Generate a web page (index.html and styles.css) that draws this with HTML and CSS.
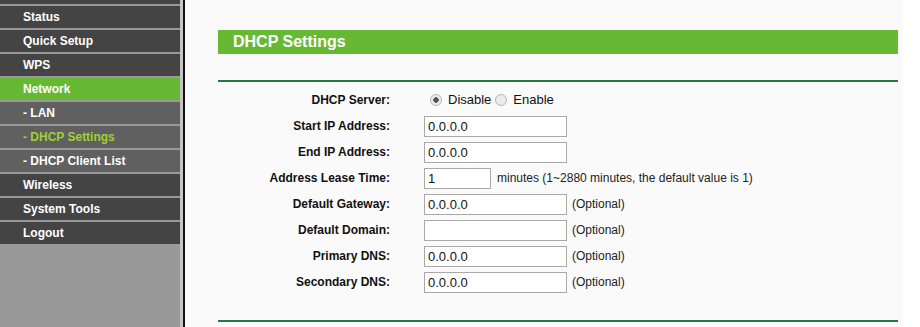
FILE: index.html
```html
<!DOCTYPE html>
<html lang="en">
  <head>
    <meta charset="UTF-8" />
    <title>DHCP Settings</title>
    <link rel="stylesheet" href="styles.css">
  </head>
  <body>
    <div class="frame">
      <div class="side">
        <div class="menu-top"></div>
        <div class="item">Status</div>
        <div class="item">Quick Setup</div>
        <div class="item">WPS</div>
        <div class="item active">Network</div>
        <div class="item sub">- LAN</div>
        <div class="item sub current">- DHCP Settings</div>
        <div class="item sub">- DHCP Client List</div>
        <div class="item">Wireless</div>
        <div class="item">System Tools</div>
        <div class="item">Logout</div>
      </div>
      <div class="divider"></div>
      <div class="main">
        <div class="title-bar">DHCP Settings</div>
        <div class="rule"></div>
        <form class="form">
          <div class="row">
            <label class="label">DHCP Server:</label>
            <div class="field radios">
              <input type="radio" name="srv" checked /><span>Disable</span>
              <input type="radio" name="srv" /><span>Enable</span>
            </div>
          </div>
          <div class="row">
            <label class="label">Start IP Address:</label>
            <div class="field"><input class="text" type="text" value="0.0.0.0" /></div>
          </div>
          <div class="row">
            <label class="label">End IP Address:</label>
            <div class="field"><input class="text" type="text" value="0.0.0.0" /></div>
          </div>
          <div class="row">
            <label class="label">Address Lease Time:</label>
            <div class="field"><input class="text short" type="text" value="1" /><span class="note">minutes (1~2880 minutes, the default value is 1)</span></div>
          </div>
          <div class="row">
            <label class="label">Default Gateway:</label>
            <div class="field"><input class="text" type="text" value="0.0.0.0" /><span class="note">(Optional)</span></div>
          </div>
          <div class="row">
            <label class="label">Default Domain:</label>
            <div class="field"><input class="text" type="text" value="" /><span class="note">(Optional)</span></div>
          </div>
          <div class="row">
            <label class="label">Primary DNS:</label>
            <div class="field"><input class="text" type="text" value="0.0.0.0" /><span class="note">(Optional)</span></div>
          </div>
          <div class="row">
            <label class="label">Secondary DNS:</label>
            <div class="field"><input class="text" type="text" value="0.0.0.0" /><span class="note">(Optional)</span></div>
          </div>
        </form>
        <div class="rule bottom"></div>
      </div>
      <div class="edge"></div>
    </div>
  </body>
</html>
```

FILE: styles.css
```css
body {
  margin: 0;
  padding: 0;
  font-family: "Liberation Sans", Arial, sans-serif;
  background: white;
}
.frame {
  display: flex;
  height: 327px;
  overflow: hidden;
}
.side {
  width: 180px;
  flex-shrink: 0;
  background: #999;
}
.menu-top {
  height: 4px;
  background: #444;
}
.item {
  height: 22px;
  margin-top: 2px;
  padding-left: 23px;
  background: #444;
  color: white;
  font-size: 12px;
  font-weight: 700;
  line-height: 22px;
}
.item.sub { background: #606060; }
.item.active { background: #66b832; }
.item.current { color: #9fd131; }
.divider {
  width: 3px;
  flex-shrink: 0;
  background: #c4c4c4;
  border-right: 2px solid #111;
}
.main {
  width: 680px;
  flex-shrink: 0;
  background: #fafafa;
  padding: 30px 5px 0 33px;
}
.edge {
  flex: 1;
  background: white;
}
.title-bar {
  height: 24px;
  background: #67b934;
  color: white;
  font-size: 16px;
  font-weight: 700;
  line-height: 24px;
  padding-left: 15px;
}
.rule {
  margin-top: 26px;
  height: 2px;
  background: #227a42;
}
.rule.bottom { margin-top: 25px; }
.form {
  margin: 5px 0 0;
}
.row {
  display: flex;
  align-items: center;
  height: 26px;
}
.label {
  width: 172px;
  text-align: right;
  font-size: 12px;
  font-weight: 700;
  color: #111;
}
.field {
  margin-left: 34px;
  display: flex;
  align-items: center;
}
.text {
  box-sizing: border-box;
  width: 143px;
  height: 21px;
  margin: 0;
  padding: 0 3px;
  border: 1px solid #a9a9a9;
  background: white;
  font-family: "Liberation Sans", Arial, sans-serif;
  font-size: 13px;
  color: #111;
  outline: none;
}
.text.short { width: 67px; }
.note {
  margin-left: 5px;
  font-size: 12px;
  color: #222;
}
.short + .note { margin-left: 6px; }
.radios {
  font-size: 13px;
  color: #111;
  margin-top: -2px;
}
.radios input {
  appearance: none;
  width: 12px;
  height: 12px;
  margin: 2px 6px 0 6px;
  border: 1px solid #b4b4b4;
  border-radius: 50%;
  background: #ececec;
  box-sizing: border-box;
}
.radios input:checked {
  background: radial-gradient(circle, #555 0 2.5px, #ececec 3px);
}
.radios span + input { margin-left: 4px; }
```
